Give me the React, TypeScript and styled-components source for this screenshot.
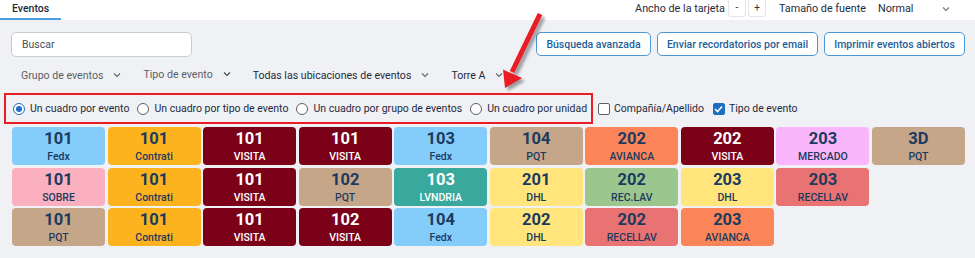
import React from "react";
import styled, { createGlobalStyle } from "styled-components";

const GlobalStyle = createGlobalStyle`
  html, body { margin: 0; padding: 0; }
  body {
    background: #f0f1f5;
    font-family: Roboto, "Liberation Sans", Arial, sans-serif;
    color: #1d2b3d;
    width: 975px;
    height: 258px;
    overflow: hidden;
  }
  * { box-sizing: border-box; }
`;

const Page = styled.div`
  position: relative;
  width: 975px;
  height: 258px;
`;

const TopBar = styled.div`
  height: 20px;
  background: #ffffff;
  display: flex;
  justify-content: space-between;
  align-items: stretch;
`;

const Tab = styled.div`
  width: 61px;
  padding-left: 12px;
  padding-top: 2px;
  font-size: 10.5px;
  font-weight: 500;
  color: #1b2a3c;
  line-height: 13px;
  border-bottom: 2px solid #4a9fe3;
`;

const TopRight = styled.div`
  display: flex;
  align-items: center;
  height: 17px;
  padding-right: 25px;
  font-size: 10.8px;
  color: #1d2b3d;
`;

const SmallBtn = styled.div<{ $ml?: number }>`
  width: 18px;
  height: 17px;
  margin-left: ${(p) => p.$ml ?? 2}px;
  border: 1px solid #e4e6ea;
  border-top: none;
  border-radius: 0 0 3px 3px;
  background: #fff;
  display: flex;
  align-items: center;
  justify-content: center;
  font-size: 10px;
  line-height: 1;
  color: #333;
`;

const TopLabel = styled.span<{ $ml?: number }>`
  margin-left: ${(p) => p.$ml ?? 0}px;
  white-space: nowrap;
`;

const SelectBox = styled.div`
  margin-left: 12px;
  width: 72px;
  display: flex;
  justify-content: space-between;
  align-items: center;
`;

const ToolRow = styled.div`
  display: flex;
  justify-content: space-between;
  align-items: flex-start;
  padding: 12px 10px 0 11px;
`;

const Search = styled.div`
  width: 181px;
  height: 25px;
  background: #fff;
  border: 1px solid #c9ccd2;
  border-radius: 5px;
  padding-left: 10px;
  font-size: 10.5px;
  line-height: 23px;
  color: #4a4f57;
`;

const BtnGroup = styled.div`
  display: flex;
  gap: 6px;
`;

const OutlineBtn = styled.div<{ $w: number }>`
  width: ${(p) => p.$w}px;
  height: 24px;
  border: 1px solid #4a98d6;
  border-radius: 5px;
  background: #fff;
  color: #1e5f99;
  font-size: 10.5px;
  font-weight: 500;
  display: flex;
  align-items: center;
  justify-content: center;
  white-space: nowrap;
`;

const FilterRow = styled.div`
  display: flex;
  align-items: center;
  padding-left: 21px;
  height: 36px;
`;

const Filter = styled.div<{ $dark?: boolean; $ml: number; $up?: number }>`
  display: flex;
  align-items: center;
  margin-left: ${(p) => p.$ml}px;
  margin-top: ${(p) => -2 * (p.$up ?? 0)}px;
  font-size: 10.6px;
  color: ${(p) => (p.$dark ? "#1d2b3d" : "#5a5f66")};
  white-space: nowrap;
  gap: 10px;
`;

const OptionsRow = styled.div`
  display: flex;
  align-items: center;
  height: 31px;
  padding-left: 4px;
  font-size: 10.5px;
  color: #1d2b3d;
`;

const RedBox = styled.div`
  display: flex;
  align-items: center;
  width: 589px;
  height: 31px;
  border: 2px solid #ea1c24;
  padding-left: 7px;
  gap: 8px;
`;

const Option = styled.label<{ $gap?: number }>`
  display: flex;
  align-items: center;
  gap: ${(p) => p.$gap ?? 4}px;
  white-space: nowrap;
`;

const Radio = styled.span<{ $on?: boolean }>`
  width: 12px;
  height: 12px;
  border-radius: 50%;
  border: 1.3px solid ${(p) => (p.$on ? "#1e6fc2" : "#5c6066")};
  background: #fff;
  display: inline-flex;
  align-items: center;
  justify-content: center;
  &::after {
    content: "";
    width: 6px;
    height: 6px;
    border-radius: 50%;
    background: ${(p) => (p.$on ? "#1e6fc2" : "transparent")};
  }
`;

const Check = styled.span<{ $on?: boolean }>`
  width: 12px;
  height: 12px;
  border-radius: 2px;
  border: 1.3px solid ${(p) => (p.$on ? "#1e6fc2" : "#5c6066")};
  background: ${(p) => (p.$on ? "#1e6fc2" : "#fff")};
  display: inline-flex;
  align-items: center;
  justify-content: center;
`;

const CheckOpts = styled.div`
  display: flex;
  align-items: center;
  margin-left: 5px;
  gap: 9px;
  font-size: 10.5px;
`;

const Grid = styled.div`
  display: grid;
  grid-template-columns: repeat(10, 1fr);
  column-gap: 2.5px;
  row-gap: 2.5px;
  width: 953px;
  margin: 3px 0 0 12px;
`;

const Card = styled.div<{ $bg: string; $fg: string }>`
  height: 38px;
  border-radius: 4px;
  background: ${(p) => p.$bg};
  color: ${(p) => p.$fg};
  display: flex;
  flex-direction: column;
  align-items: center;
  padding-top: 2px;
`;

const Num = styled.div`
  font-size: 16.5px;
  font-weight: 700;
  line-height: 20px;
`;

const Lbl = styled.div`
  font-size: 10.5px;
  font-weight: 500;
  line-height: 14px;
  margin-top: 1px;
`;

const Arrow = styled.svg`
  position: absolute;
  left: 0;
  top: 0;
  pointer-events: none;
`;

const Chevron = ({ c = "#666" }: { c?: string }) => (
  <svg width="8" height="6" viewBox="0 0 8 6">
    <path d="M1 1.5 L4 4.5 L7 1.5" fill="none" stroke={c} strokeWidth="1.1" />
  </svg>
);

const C = {
  blue: ["#84ccfa", "#1b3a5e"],
  amber: ["#fdb31e", "#1b3a5e"],
  maroon: ["#7b0118", "#ffffff"],
  tan: ["#c6a689", "#1b3a5e"],
  coral: ["#fb8558", "#1b3a5e"],
  lilac: ["#f9b6fb", "#1b3a5e"],
  pink: ["#fbb0bf", "#1b3a5e"],
  teal: ["#3aa99d", "#ffffff"],
  yellow: ["#ffe57b", "#1b3a5e"],
  green: ["#9bc78f", "#1b3a5e"],
  salmon: ["#e97272", "#1b3a5e"],
} as const;

type K = keyof typeof C;

const cards: [string, string, K][] = [
  ["101", "Fedx", "blue"],
  ["101", "Contrati", "amber"],
  ["101", "VISITA", "maroon"],
  ["101", "VISITA", "maroon"],
  ["103", "Fedx", "blue"],
  ["104", "PQT", "tan"],
  ["202", "AVIANCA", "coral"],
  ["202", "VISITA", "maroon"],
  ["203", "MERCADO", "lilac"],
  ["3D", "PQT", "tan"],
  ["101", "SOBRE", "pink"],
  ["101", "Contrati", "amber"],
  ["101", "VISITA", "maroon"],
  ["102", "PQT", "tan"],
  ["103", "LVNDRIA", "teal"],
  ["201", "DHL", "yellow"],
  ["202", "REC.LAV", "green"],
  ["203", "DHL", "yellow"],
  ["203", "RECELLAV", "salmon"],
  ["", "", "blue"],
  ["101", "PQT", "tan"],
  ["101", "Contrati", "amber"],
  ["101", "VISITA", "maroon"],
  ["102", "VISITA", "maroon"],
  ["104", "Fedx", "blue"],
  ["202", "DHL", "yellow"],
  ["202", "RECELLAV", "salmon"],
  ["203", "AVIANCA", "coral"],
];

const EmptyCell = styled.div``;

export default function App() {
  return (
    <Page>
      <GlobalStyle />
      <TopBar>
        <Tab>Eventos</Tab>
        <TopRight>
          <TopLabel>Ancho de la tarjeta</TopLabel>
          <SmallBtn $ml={3}>-</SmallBtn>
          <SmallBtn>+</SmallBtn>
          <TopLabel $ml={13}>Tamaño de fuente</TopLabel>
          <SelectBox>
            <span>Normal</span>
            <Chevron c="#777" />
          </SelectBox>
        </TopRight>
      </TopBar>
      <ToolRow>
        <Search>Buscar</Search>
        <BtnGroup>
          <OutlineBtn $w={115}>Búsqueda avanzada</OutlineBtn>
          <OutlineBtn $w={161}>Enviar recordatorios por email</OutlineBtn>
          <OutlineBtn $w={141}>Imprimir eventos abiertos</OutlineBtn>
        </BtnGroup>
      </ToolRow>
      <FilterRow>
        <Filter $ml={0}>
          Grupo de eventos <Chevron />
        </Filter>
        <Filter $ml={22} $up={1}>
          Tipo de evento <Chevron c="#444" />
        </Filter>
        <Filter $ml={22} $dark>
          Todas las ubicaciones de eventos <Chevron />
        </Filter>
        <Filter $ml={22} $dark>
          Torre A <Chevron />
        </Filter>
      </FilterRow>
      <OptionsRow>
        <RedBox>
          <Option $gap={5}>
            <Radio $on /> Un cuadro por evento
          </Option>
          <Option $gap={5}>
            <Radio /> Un cuadro por tipo de evento
          </Option>
          <Option $gap={5}>
            <Radio /> Un cuadro por grupo de eventos
          </Option>
          <Option $gap={5}>
            <Radio /> Un cuadro por unidad
          </Option>
        </RedBox>
        <CheckOpts>
          <Option>
            <Check /> Compañía/Apellido
          </Option>
          <Option>
            <Check $on>
              <svg width="9" height="8" viewBox="0 0 9 8">
                <path d="M1 4 L3.5 6.5 L8 1.5" fill="none" stroke="#fff" strokeWidth="1.6" />
              </svg>
            </Check>{" "}
            Tipo de evento
          </Option>
        </CheckOpts>
      </OptionsRow>
      <Grid>
        {cards.map(([n, l, k], i) =>
          n === "" ? (
            <EmptyCell key={i} />
          ) : (
            <Card key={i} $bg={C[k][0]} $fg={C[k][1]}>
              <Num>{n}</Num>
              <Lbl>{l}</Lbl>
            </Card>
          )
        )}
      </Grid>
      <Arrow width="975" height="258" viewBox="0 0 975 258">
        <defs>
          <filter id="sh" x="-50%" y="-50%" width="200%" height="200%">
            <feGaussianBlur stdDeviation="1.5" />
          </filter>
        </defs>
        <g transform="translate(3,3)" opacity="0.35" filter="url(#sh)">
          <line x1="540" y1="14" x2="512" y2="72" stroke="#000" strokeWidth="5" />
          <polygon points="505,88 522,78 503,69.5" fill="#000" />
        </g>
        <line x1="540" y1="14" x2="512" y2="72" stroke="#ea1c24" strokeWidth="5" />
        <polygon points="505,88 522,78 503,69.5" fill="#ea1c24" />
      </Arrow>
    </Page>
  );
}
